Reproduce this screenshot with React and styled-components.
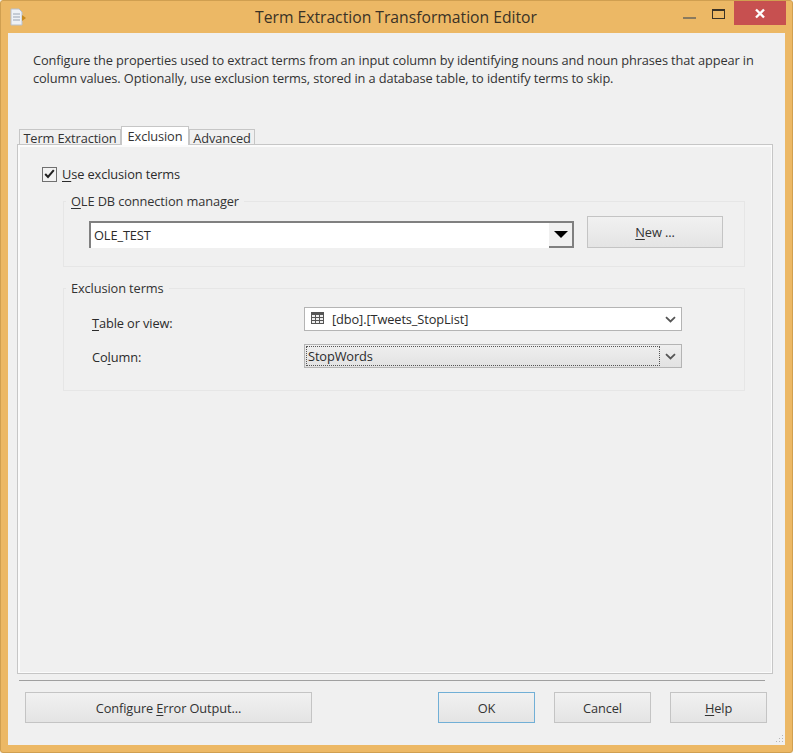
import React from "react";
import styled, { createGlobalStyle } from "styled-components";

const GlobalStyle = createGlobalStyle`
    html, body {
        margin: 0;
        padding: 0;
        background: #f4f1ea;
    }
    body {
        font-family: "Open Sans", "Noto Sans", "Liberation Sans", sans-serif;
        font-size: 12.8px;
        letter-spacing: -0.11px;
        color: #2b2b2b;
    }
`;

const Window = styled.div`
    width: 793px;
    height: 753px;
    box-sizing: border-box;
    display: flex;
    flex-direction: column;
    background: #ecb865;
    border: 1px solid #d09f50;
    border-radius: 3px;
    padding: 0 7px 7px;
    overflow: hidden;
`;

const TitleBar = styled.div`
    height: 32px;
    flex: none;
    display: flex;
    align-items: flex-start;
`;

const AppIcon = styled.svg`
    width: 17px;
    height: 18px;
    margin: 7px 0 0 2px;
`;

const Title = styled.div`
    flex: 1;
    text-align: center;
    font-size: 15.7px;
    letter-spacing: 0;
    line-height: 32px;
    color: #3a3226;
    padding-left: 90px;
`;

const Controls = styled.div`
    display: flex;
    align-items: flex-start;
    margin-right: -1px;
`;

const ControlButton = styled.div`
    width: ${(p) => p.$w}px;
    height: ${(p) => (p.$close ? 24 : 22)}px;
    display: flex;
    align-items: center;
    justify-content: center;
    background: ${(p) => (p.$close ? "#c75050" : "transparent")};
`;

const MinGlyph = styled.div`
    width: 13px;
    height: 2px;
    background: #8a7a5e;
    margin-top: 11px;
`;

const MaxGlyph = styled.div`
    width: 11px;
    height: 7px;
    border: 1px solid #3a3226;
    border-top-width: 2px;
    background: #ecb865;
    box-sizing: content-box;
    margin-top: 3px;
`;

const Client = styled.div`
    flex: 1;
    min-height: 0;
    background: #f0f0f0;
    display: flex;
    flex-direction: column;
    padding: 0 12px 0 9px;
    position: relative;
`;

const Description = styled.p`
    margin: 0;
    padding: 18px 0 0 16px;
    height: 94px;
    box-sizing: border-box;
    line-height: 18px;
    white-space: nowrap;
    color: #333;
    flex: none;
`;

const TabRow = styled.div`
    display: flex;
    align-items: flex-end;
    padding-left: 2px;
    height: 18px;
    flex: none;
    position: relative;
    z-index: 1;
    margin-bottom: -1px;
`;

const Tab = styled.div`
    box-sizing: border-box;
    width: ${(p) => p.$w}px;
    height: ${(p) => (p.$active ? 19 : 16)}px;
    line-height: ${(p) => (p.$active ? 19 : 16)}px;
    text-align: center;
    white-space: nowrap;
    border: 1px solid #c6c6c6;
    border-bottom: ${(p) => (p.$active ? "0" : "1px solid #c6c6c6")};
    background: ${(p) => (p.$active ? "#ffffff" : "#f0f0f0")};
    color: #333;
`;

const Panel = styled.div`
    box-sizing: border-box;
    width: 756px;
    height: 530px;
    flex: none;
    border: 1px solid #c6c6c6;
    box-shadow: inset 2px 2px 0 #fbfbfb, inset -1px -1px 0 #fbfbfb;
    padding: 21px 27px 0 24px;
    display: flex;
    flex-direction: column;
`;

const CheckRow = styled.label`
    display: flex;
    align-items: center;
    gap: 5px;
    height: 16px;
    margin-bottom: 11px;
`;

const CheckBox = styled.span`
    width: 13px;
    height: 13px;
    border: 1px solid #707070;
    background: #f2f2f2;
    display: flex;
    align-items: center;
    justify-content: center;
    flex: none;
`;

const Group = styled.fieldset`
    margin: 0 0 13px 21px;
    padding: ${(p) => p.$pad};
    width: 682px;
    height: ${(p) => p.$h}px;
    box-sizing: border-box;
    border: 1px solid #e6e6e6;
    min-width: 0;
`;

const Legend = styled.legend`
    margin-left: 2px;
    padding: 0 5px;
    line-height: 16px;
    color: #333;
`;

const ConnectionRow = styled.div`
    display: flex;
    align-items: flex-start;
    padding-left: 25px;
`;

const Combo = styled.div`
    width: 485px;
    height: 27px;
    box-sizing: border-box;
    margin-top: 5px;
    display: flex;
    background: #fff;
    border-top: 2px solid #808080;
    border-left: 2px solid #808080;
`;

const ComboValue = styled.div`
    flex: 1;
    line-height: 25px;
    padding-left: 3px;
`;

const ComboArrow = styled.div`
    width: 25px;
    background: #f0f0f0;
    border-right: 2px solid #808080;
    border-bottom: 2px solid #808080;
    display: flex;
    align-items: center;
    justify-content: center;
    box-sizing: border-box;

    &::after {
        content: "";
        border-left: 7px solid transparent;
        border-right: 7px solid transparent;
        border-top: 7px solid #000;
    }
`;

const Button = styled.div`
    box-sizing: border-box;
    width: ${(p) => p.$w}px;
    height: ${(p) => p.$h || 31}px;
    margin-left: ${(p) => p.$ml || 0}px;
    flex: none;
    display: flex;
    align-items: center;
    justify-content: center;
    color: #333;
    border: 1px solid ${(p) => (p.$primary ? "#71afd6" : "#c4c4c4")};
    background: linear-gradient(#f1f1f1, #e4e4e4);
`;

const FieldRow = styled.div`
    display: flex;
    align-items: center;
    height: 24px;
    margin-bottom: 13px;
`;

const FieldLabel = styled.div`
    width: 240px;
    padding-left: 28px;
    box-sizing: border-box;
    flex: none;
    margin-top: ${(p) => p.$mt || 0}px;
`;

const Select = styled.div`
    width: 378px;
    height: 24px;
    box-sizing: border-box;
    display: flex;
    align-items: center;
    border: 1px solid #b4b4b4;
    background: ${(p) => (p.$focused ? "linear-gradient(#efefef, #e2e2e2)" : "#fff")};
    position: relative;
`;

const SelectText = styled.div`
    flex: 1;
    padding-left: ${(p) => p.$pl}px;
    white-space: nowrap;
`;

const FocusRing = styled.div`
    position: absolute;
    left: 1px;
    top: 1px;
    bottom: 1px;
    right: 21px;
    border: 1px dotted #555;
`;

const Chevron = styled.svg`
    width: 11px;
    height: 7px;
    margin-right: 5px;
    flex: none;
`;

const TableGlyph = styled.svg`
    width: 13px;
    height: 12px;
    margin-left: 6px;
    margin-top: -3px;
    flex: none;
`;

const Separator = styled.div`
    height: 1px;
    width: 746px;
    margin: 6px 0 0 2px;
    background: #a0a0a0;
    flex: none;
`;

const Footer = styled.div`
    display: flex;
    padding: 11px 0 0 8px;
`;

const Grip = styled.svg`
    position: absolute;
    right: 1px;
    bottom: 1px;
    width: 10px;
    height: 10px;
`;

const Key = styled.span`
    text-decoration: underline;
    text-underline-offset: 2px;
    text-decoration-thickness: 1px;
`;

function Chev() {
    return (
        <Chevron viewBox="0 0 11 7">
            <path d="M1 1.2 L5.5 5.5 L10 1.2" fill="none" stroke="#555" strokeWidth="1.8" />
        </Chevron>
    );
}

export default function App() {
    return (
        <>
            <GlobalStyle />
            <Window>
                <TitleBar>
                    <AppIcon viewBox="0 0 17 18">
                        <path d="M1 1 H9 L12 4 V17 H1 Z" fill="#eef1f6" stroke="#b9c0cb" />
                        <path d="M3 6 H10 M3 9 H10 M3 12 H10" stroke="#9aa4b3" />
                        <path d="M12 7 L16 10 L12 13 Z" fill="#c98a1e" />
                    </AppIcon>
                    <Title>Term Extraction Transformation Editor</Title>
                    <Controls>
                        <ControlButton $w={28}><MinGlyph /></ControlButton>
                        <ControlButton $w={31}><MaxGlyph /></ControlButton>
                        <ControlButton $w={52} $close>
                            <svg width="12" height="11" viewBox="0 0 12 11">
                                <path d="M2 1.5 L10 9.5 M10 1.5 L2 9.5" stroke="#fff" strokeWidth="2.4" />
                            </svg>
                        </ControlButton>
                    </Controls>
                </TitleBar>
                <Client>
                    <Description>
                        Configure the properties used to extract terms from an input column by identifying nouns and noun phrases that appear in
                        <br />
                        column values. Optionally, use exclusion terms, stored in a database table, to identify terms to skip.
                    </Description>
                    <TabRow>
                        <Tab $w={102}>Term Extraction</Tab>
                        <Tab $w={68} $active>Exclusion</Tab>
                        <Tab $w={66}>Advanced</Tab>
                    </TabRow>
                    <Panel>
                        <CheckRow>
                            <CheckBox>
                                <svg width="11" height="10" viewBox="0 0 11 10">
                                    <path d="M1.2 5 L4 8 L9.8 1.2" fill="none" stroke="#222" strokeWidth="2" />
                                </svg>
                            </CheckBox>
                            <span><Key>U</Key>se exclusion terms</span>
                        </CheckRow>
                        <Group $h={74} $pad="7px 0 0 0">
                            <Legend><Key>O</Key>LE DB connection manager</Legend>
                            <ConnectionRow>
                                <Combo>
                                    <ComboValue>OLE_TEST</ComboValue>
                                    <ComboArrow />
                                </Combo>
                                <Button $w={136} $h={32} $ml={13}><span><Key>N</Key>ew ...</span></Button>
                            </ConnectionRow>
                        </Group>
                        <Group $h={111} $pad="11px 0 0 0">
                            <Legend>Exclusion terms</Legend>
                            <FieldRow>
                                <FieldLabel $mt={8}><Key>T</Key>able or view:</FieldLabel>
                                <Select>
                                    <TableGlyph viewBox="0 0 13 12">
                                        <path d="M0 0 H13 V12 H0 Z" fill="#555" />
                                        <path d="M1 3 H4 V5 H1 Z M5 3 H8 V5 H5 Z M9 3 H12 V5 H9 Z M1 6 H4 V8 H1 Z M5 6 H8 V8 H5 Z M9 6 H12 V8 H9 Z M1 9 H4 V11 H1 Z M5 9 H8 V11 H5 Z M9 9 H12 V11 H9 Z" fill="#eee" />
                                    </TableGlyph>
                                    <SelectText $pl={8}>[dbo].[Tweets_StopList]</SelectText>
                                    <Chev />
                                </Select>
                            </FieldRow>
                            <FieldRow>
                                <FieldLabel $mt={2}>Co<Key>l</Key>umn:</FieldLabel>
                                <Select $focused>
                                    <FocusRing />
                                    <SelectText $pl={3}>StopWords</SelectText>
                                    <Chev />
                                </Select>
                            </FieldRow>
                        </Group>
                    </Panel>
                    <Separator />
                    <Footer>
                        <Button $w={287}><span>Configure <Key>E</Key>rror Output...</span></Button>
                        <Button $w={97} $ml={126} $primary>OK</Button>
                        <Button $w={97} $ml={19}>Cancel</Button>
                        <Button $w={97} $ml={19}><span><Key>H</Key>elp</span></Button>
                    </Footer>
                    <Grip viewBox="0 0 10 10">
                        <path d="M8 1h1v1H8z M5 4h1v1H5z M8 4h1v1H8z M2 7h1v1H2z M5 7h1v1H5z M8 7h1v1H8z" fill="#b5b5b5" />
                    </Grip>
                </Client>
            </Window>
        </>
    );
}
